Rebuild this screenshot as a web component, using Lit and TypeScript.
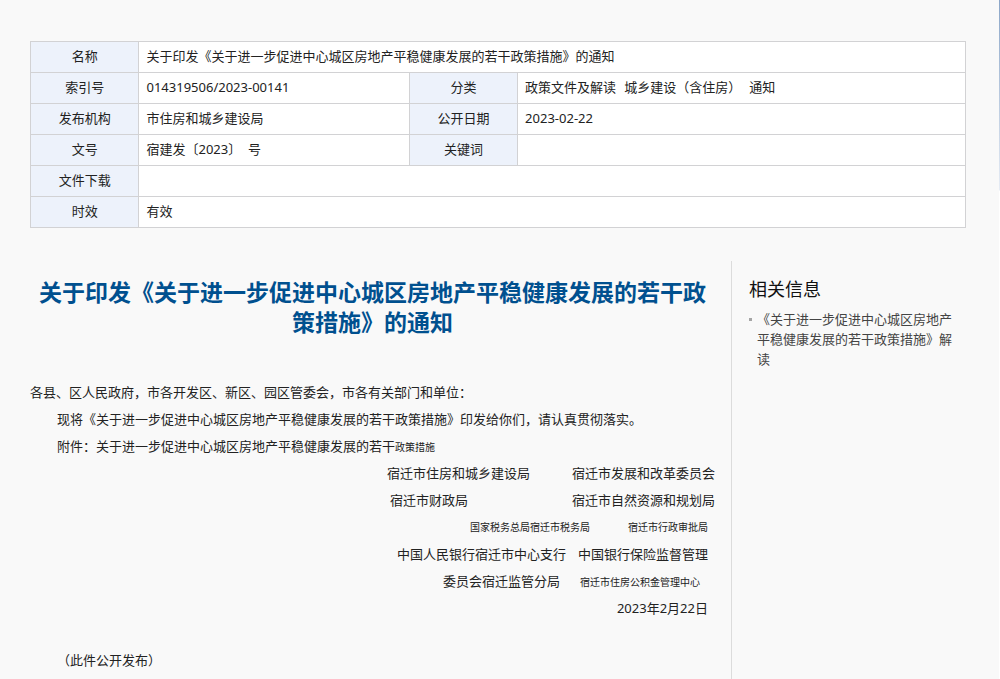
import { LitElement, html, css } from "lit";
import { customElement } from "lit/decorators.js";

@customElement("doc-meta")
class DocMeta extends LitElement {
  static styles = css`
    :host {
      display: block;
    }
    .meta {
      width: 100%;
      table-layout: fixed;
      border-collapse: collapse;
      background: #fff;
      font-size: 13px;
      line-height: 20px;
      color: #222;
    }
    .label-col {
      width: 11.6%;
    }
    .value-col {
      width: 28.9%;
    }
    th,
    td {
      height: 30px;
      box-sizing: border-box;
      padding: 4px 7px 6px;
      border: 1px solid #d2d2d4;
      text-align: left;
      font-weight: 400;
    }
    th {
      background: #edf2fb;
      text-align: center;
    }
    .tags {
      display: flex;
      gap: 8px;
    }
  `;

  render() {
    return html`
      <table class="meta">
        <colgroup>
          <col class="label-col" />
          <col class="value-col" />
          <col class="label-col" />
          <col />
        </colgroup>
        <tbody>
          <tr>
            <th scope="row">名称</th>
            <td colspan="3">关于印发《关于进一步促进中心城区房地产平稳健康发展的若干政策措施》的通知</td>
          </tr>
          <tr>
            <th scope="row">索引号</th>
            <td>014319506/2023-00141</td>
            <th scope="row">分类</th>
            <td>
              <div class="tags">
                <span>政策文件及解读</span><span>城乡建设（含住房）</span><span>通知</span>
              </div>
            </td>
          </tr>
          <tr>
            <th scope="row">发布机构</th>
            <td>市住房和城乡建设局</td>
            <th scope="row">公开日期</th>
            <td>2023-02-22</td>
          </tr>
          <tr>
            <th scope="row">文号</th>
            <td>宿建发〔2023〕&nbsp;&nbsp;号</td>
            <th scope="row">关键词</th>
            <td></td>
          </tr>
          <tr>
            <th scope="row">文件下载</th>
            <td colspan="3"></td>
          </tr>
          <tr>
            <th scope="row">时效</th>
            <td colspan="3">有效</td>
          </tr>
        </tbody>
      </table>
    `;
  }
}

@customElement("doc-article")
class DocArticle extends LitElement {
  static styles = css`
    :host {
      display: block;
      font-size: 13px;
      line-height: 27px;
      color: #222;
    }
    h1 {
      margin: 0 0 42px;
      font-size: 23px;
      line-height: 30px;
      font-weight: 700;
      text-align: center;
      color: #00508f;
    }
    p {
      margin: 0;
    }
    .indent {
      padding-left: 27px;
    }
    .small {
      font-size: 10px;
    }
    span.small {
      line-height: 1;
    }
    .sign {
      display: flex;
      justify-content: flex-end;
      align-items: baseline;
      gap: 42px;
    }
    .inset {
      padding-right: 7px;
    }
    .inset-wide {
      padding-right: 15px;
    }
    .far {
      gap: 104px;
    }
    .near {
      gap: 20px;
    }
    .tight {
      gap: 12px;
    }
    .pair {
      gap: 38px;
    }
    .closing {
      padding-top: 25px;
    }
  `;

  render() {
    return html`
      <h1>关于印发《关于进一步促进中心城区房地产平稳健康发展的若干政策措施》的通知</h1>
      <p>各县、区人民政府，市各开发区、新区、园区管委会，市各有关部门和单位：</p>
      <p class="indent">现将《关于进一步促进中心城区房地产平稳健康发展的若干政策措施》印发给你们，请认真贯彻落实。</p>
      <p class="indent">附件：关于进一步促进中心城区房地产平稳健康发展的若干<span class="small">政策措施</span></p>
      <p class="sign"><span>宿迁市住房和城乡建设局</span><span>宿迁市发展和改革委员会</span></p>
      <p class="sign far"><span>宿迁市财政局</span><span>宿迁市自然资源和规划局</span></p>
      <p class="sign inset small pair"><span>国家税务总局宿迁市税务局</span><span>宿迁市行政审批局</span></p>
      <p class="sign inset tight"><span>中国人民银行宿迁市中心支行</span><span>中国银行保险监督管理</span></p>
      <p class="sign inset-wide near"><span>委员会宿迁监管分局</span><span class="small">宿迁市住房公积金管理中心</span></p>
      <p class="sign inset">2023年2月22日</p>
      <p class="indent closing">（此件公开发布）</p>
    `;
  }
}

@customElement("related-info")
class RelatedInfo extends LitElement {
  static styles = css`
    :host {
      display: block;
    }
    h2 {
      margin: 0 0 7px;
      font-size: 18px;
      line-height: 26px;
      font-weight: 400;
      color: #111;
    }
    ul {
      margin: 0;
      padding: 0;
      list-style: none;
    }
    li {
      display: flex;
      align-items: flex-start;
      gap: 5px;
      font-size: 13px;
      line-height: 20px;
    }
    li::before {
      content: "";
      flex: none;
      width: 3px;
      height: 3px;
      margin-top: 9px;
      background: #a5a5a5;
    }
    a {
      color: #444;
      text-decoration: none;
    }
    a:hover {
      color: #00508f;
    }
  `;

  render() {
    return html`
      <h2>相关信息</h2>
      <ul>
        <li><a href="#">《关于进一步促进中心城区房地产平稳健康发展的若干政策措施》解读</a></li>
      </ul>
    `;
  }
}

@customElement("app-root")
class AppRoot extends LitElement {
  static styles = css`
    :host {
      display: block;
      box-sizing: border-box;
      height: 100vh;
      overflow: hidden;
      padding-right: 1px;
      background: linear-gradient(#8ba6c8, #e6ecf5 190px, #fff 191px);
      font-family: "Noto Sans", "Noto Sans CJK SC", sans-serif;
    }
    .page {
      box-sizing: border-box;
      min-height: 100%;
      padding: 41px 33px 0 30px;
      background: #f9f9f9;
    }
    .columns {
      display: grid;
      grid-template-columns: minmax(0, 1fr) 235px;
      margin-top: 33px;
    }
    .main {
      padding: 16px 16px 24px 0;
    }
    .side {
      padding: 15px 8px 0 17px;
      border-left: 1px solid #dcdcdc;
    }
  `;

  render() {
    return html`
      <div class="page">
        <doc-meta></doc-meta>
        <div class="columns">
          <main class="main"><doc-article></doc-article></main>
          <aside class="side"><related-info></related-info></aside>
        </div>
      </div>
    `;
  }
}
